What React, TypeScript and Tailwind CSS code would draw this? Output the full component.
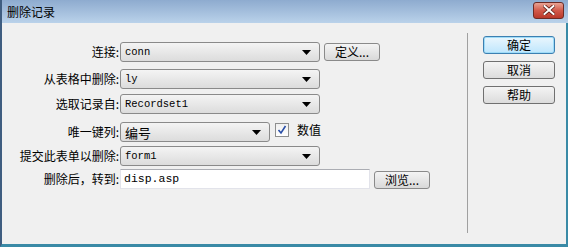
import React from 'react';

const cjk = { fontFamily: '"SimSun", "Noto Sans CJK SC", sans-serif' };
const mono = { fontFamily: '"Liberation Mono", "Noto Sans CJK SC", monospace' };

function Arrow() {
    return (
        <svg width="9" height="5" viewBox="0 0 9 5" className="shrink-0">
            <polygon points="0,0 9,0 4.5,5" fill="#000" />
        </svg>
    );
}

function Select({ value, width, cjkValue }: { value: string; width: string; cjkValue?: boolean }) {
    return (
        <div className={`${width} h-[20px] flex items-center justify-between pl-[4px] pr-[8px] border border-[#8a8a8a] rounded-[3px] bg-gradient-to-b from-[#f4f4f4] to-[#dcdcdc]`}>
            <span className={cjkValue ? 'text-[13px] text-black leading-none' : 'text-[10.5px] text-black leading-none'} style={cjkValue ? cjk : mono}>{value}</span>
            <Arrow />
        </div>
    );
}

function SmallButton({ label }: { label: string }) {
    return (
        <div className="w-[56px] h-[18px] flex items-center justify-center border border-[#8a8a8a] rounded-[3px] bg-gradient-to-b from-[#f4f4f4] to-[#d9d9d9] text-[12px] text-black leading-none" style={cjk}>
            {label}
        </div>
    );
}

function Row({ label, children, className }: { label: string; children: React.ReactNode; className?: string }) {
    return (
        <div className={`flex items-center ${className ?? ''}`}>
            <div className="w-[118px] pr-[1px] text-right text-[12px] text-black leading-none shrink-0" style={cjk}>{label}</div>
            {children}
        </div>
    );
}

function SideButton({ label, primary }: { label: string; primary?: boolean }) {
    return (
        <div
            className={
                primary
                    ? 'w-[72px] h-[18px] flex items-center justify-center border border-[#3c7fb1] rounded-[3px] bg-gradient-to-b from-[#eaf6fd] to-[#bee6fd] text-[12px] text-black leading-none shadow-[inset_0_0_0_1px_#9fdcf8]'
                    : 'w-[72px] h-[18px] flex items-center justify-center border border-[#707070] rounded-[3px] bg-gradient-to-b from-[#f4f4f4] to-[#dcdcdc] text-[12px] text-black leading-none'
            }
            style={cjk}
        >
            {label}
        </div>
    );
}

export default function App() {
    return (
        <div className="w-[568px] h-[247px] flex flex-col bg-[#f0f0f0] overflow-hidden">
            <div className="h-[23px] flex items-center justify-between bg-gradient-to-b from-[#8eabcf] to-[#bad2ea] border-l-2 border-[#3f5d80] pl-[5px] pr-[4px]">
                <span className="text-[12px] text-black leading-none" style={cjk}>删除记录</span>
                <div className="w-[31px] h-[17px] mb-[3px] flex items-center justify-center rounded-[3px] border border-[#6d2b25] bg-gradient-to-b from-[#e8a394] via-[#d2594a] to-[#b9382a]">
                    <svg width="12" height="10" viewBox="0 0 12 10">
                        <path d="M1.5 1 L10.5 9 M10.5 1 L1.5 9" stroke="#5a1a12" strokeWidth="3.6" strokeLinecap="square" />
                        <path d="M1.5 1 L10.5 9 M10.5 1 L1.5 9" stroke="#fff" strokeWidth="2" strokeLinecap="square" />
                    </svg>
                </div>
            </div>
            <div className="flex-1 flex border-l-2 border-l-[#3f5d80] border-b-[3px] border-b-[#3a8aa6] border-r-2 border-r-[#3a8aa6]">
                <div className="w-[465px] flex flex-col pt-[19px]">
                    <Row label="连接:">
                        <Select value="conn" width="w-[200px]" />
                        <div className="ml-[4px]"><SmallButton label="定义..." /></div>
                    </Row>
                    <Row label="从表格中删除:" className="mt-[7px]">
                        <Select value="ly" width="w-[200px]" />
                    </Row>
                    <Row label="选取记录自:" className="mt-[5px]">
                        <Select value="Recordset1" width="w-[200px]" />
                    </Row>
                    <Row label="唯一键列:" className="mt-[8px]">
                        <Select value="编号" width="w-[150px]" cjkValue />
                        <div className="ml-[5px] w-[14px] h-[14px] mb-[4px] border border-[#8e8f8f] bg-gradient-to-b from-[#f0f0f0] to-[#ffffff] flex items-center justify-center">
                            <svg width="10" height="10" viewBox="0 0 10 10">
                                <path d="M1.5 5 L4 8 L8.5 1" fill="none" stroke="#2a4fa8" strokeWidth="1.6" />
                            </svg>
                        </div>
                        <span className="ml-[8px] mb-[4px] text-[12px] text-black leading-none" style={cjk}>数值</span>
                    </Row>
                    <Row label="提交此表单以删除:" className="mt-[4px]">
                        <Select value="form1" width="w-[200px]" />
                    </Row>
                    <Row label="删除后，转到:" className="mt-[2px]">
                        <div className="w-[250px] h-[20px] flex items-center pl-[3px] bg-white border border-[#e2e3ea] border-t-[#abadb3]">
                            <span className="text-[11.5px] text-black leading-none" style={mono}>disp.asp</span>
                        </div>
                        <div className="ml-[4px] mt-[3px]"><SmallButton label="浏览..." /></div>
                    </Row>
                </div>
                <div className="w-px mt-[10px] mb-[11px] bg-[#a0a0a0]" />
                <div className="flex flex-col gap-[7px] pt-[13px] pl-[15px]">
                    <SideButton label="确定" primary />
                    <SideButton label="取消" />
                    <SideButton label="帮助" />
                </div>
            </div>
        </div>
    );
}
